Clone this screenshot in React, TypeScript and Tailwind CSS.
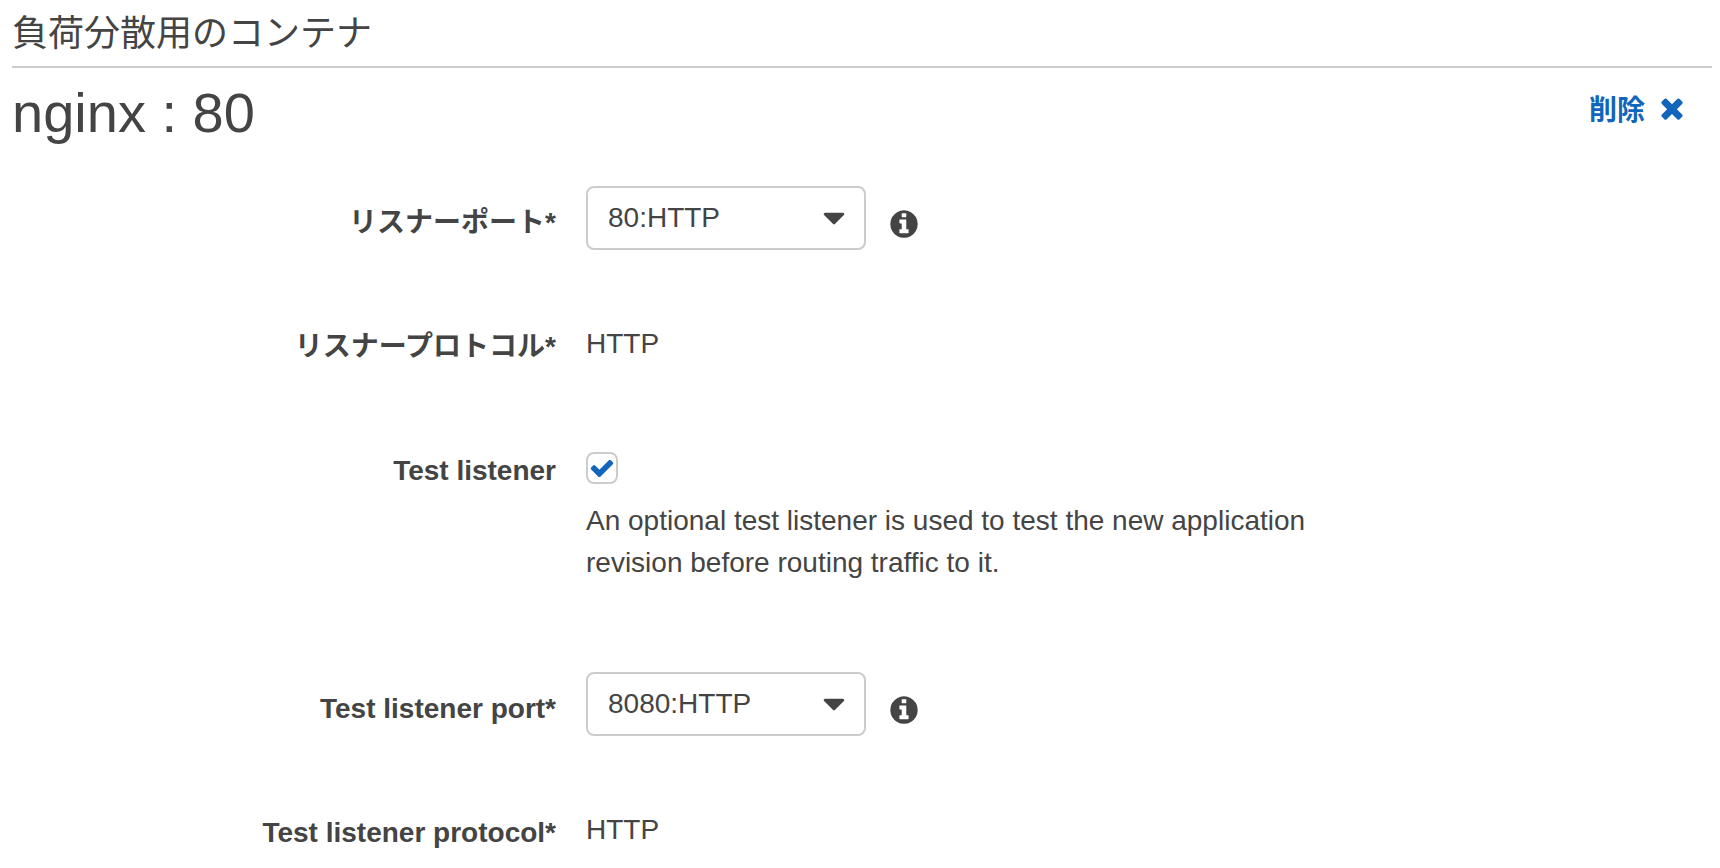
import React, { useState } from 'react';

interface IconProps {
  path: string;
  className?: string;
}

const ICONS = {
  times:
    'M1490 1322q0 40-28 68l-136 136q-28 28-68 28t-68-28l-294-294-294 294q-28 28-68 28t-68-28l-136-136q-28-28-28-68t28-68l294-294-294-294q-28-28-28-68t28-68l136-136q28-28 68-28t68 28l294 294 294-294q28-28 68-28t68 28l136 136q28 28 28 68t-28 68l-294 294 294 294q28 28 28 68z',
  check:
    'M1671 566q0 40-28 68l-724 724-136 136q-28 28-68 28t-68-28l-136-136-362-362q-28-28-28-68t28-68l136-136q28-28 68-28t68 28l294 295 656-657q28-28 68-28t68 28l136 136q28 28 28 68z',
  info: 'M1152 1376v-160q0-14-9-23t-23-9h-96v-512q0-14-9-23t-23-9h-320q-14 0-23 9t-9 23v160q0 14 9 23t23 9h96v320h-96q-14 0-23 9t-9 23v160q0 14 9 23t23 9h448q14 0 23-9t9-23zm-128-896v-160q0-14-9-23t-23-9h-192q-14 0-23 9t-9 23v160q0 14 9 23t23 9h192q14 0 23-9t9-23zm640 416q0 209-103 385.5t-279.5 279.5-385.5 103-385.5-103-279.5-279.5-103-385.5 103-385.5 279.5-279.5 385.5-103 385.5 103 279.5 279.5 103 385.5z',
  caret:
    'M1408 704q0 26-19 45l-448 448q-19 19-45 19t-45-19l-448-448q-19-19-19-45t19-45 45-19h896q26 0 45 19t19 45z',
};

const Icon: React.FC<IconProps> = ({ path, className }) => (
  <svg viewBox="0 0 1792 1792" fill="currentColor" aria-hidden="true" className={className}>
    <path d={path} />
  </svg>
);

interface FormRowProps {
  label: string;
  htmlFor: string;
  children: React.ReactNode;
}

const FormRow: React.FC<FormRowProps> = ({ label, htmlFor, children }) => (
  <div className="flex min-h-16 items-start gap-[30px]">
    <label htmlFor={htmlFor} className="w-[32%] shrink-0 pt-4 text-right font-bold">
      {label}
    </label>
    {children}
  </div>
);

interface PortSelectProps {
  id: string;
  value: string;
  options: string[];
  onChange: (value: string) => void;
}

const PortSelect: React.FC<PortSelectProps> = ({ id, value, options, onChange }) => (
  <div className="flex items-start gap-[22px]">
    <div className="relative w-[280px]">
      <select
        id={id}
        value={value}
        onChange={(e) => onChange(e.target.value)}
        className="h-16 w-full appearance-none rounded-lg border-2 border-[#ccc] bg-white px-5"
      >
        {options.map((option) => (
          <option key={option}>{option}</option>
        ))}
      </select>
      <Icon path={ICONS.caret} className="pointer-events-none absolute top-[14px] right-[14px] size-9" />
    </div>
    <button type="button" aria-label="Info" className="mt-[22px]">
      <Icon path={ICONS.info} className="size-8" />
    </button>
  </div>
);

const App: React.FC = () => {
  const [port, setPort] = useState('80:HTTP');
  const [testPort, setTestPort] = useState('8080:HTTP');
  const [useTest, setUseTest] = useState(true);
  const ports = ['80:HTTP', '8080:HTTP'];

  return (
    <main className="bg-white pr-2 pb-2 pl-3 font-['Liberation_Sans','Noto_Sans_CJK_JP',sans-serif] text-[28px] leading-[42px] text-[#444]">
      <h2 className="border-b-2 border-[#ccc] pt-[10px] pb-2 text-[36px] leading-[48px]">
        負荷分散用のコンテナ
      </h2>

      <div className="flex items-start justify-between pt-[13px] pr-6">
        <h1 className="text-[56px] leading-[64px]">nginx : 80</h1>
        <button
          type="button"
          className="flex items-center gap-[11px] pt-[6px] font-['Noto_Sans_CJK_JP',sans-serif] font-bold text-[#1166bb]"
        >
          削除
          <Icon path={ICONS.times} className="size-8" />
        </button>
      </div>

      <form className="flex flex-col gap-[60px] pt-[41px]">
        <FormRow label="リスナーポート*" htmlFor="port">
          <PortSelect id="port" value={port} options={ports} onChange={setPort} />
        </FormRow>

        <FormRow label="リスナープロトコル*" htmlFor="protocol">
          <output id="protocol" className="pt-[13px]">
            HTTP
          </output>
        </FormRow>

        <FormRow label="Test listener" htmlFor="test-listener">
          <div className="max-w-[760px] pt-[18px] pb-7">
            <div className="relative size-8">
              <input
                id="test-listener"
                type="checkbox"
                checked={useTest}
                onChange={(e) => setUseTest(e.target.checked)}
                className="block size-8 appearance-none rounded-lg border-2 border-[#ccc] bg-white"
              />
              {useTest && (
                <Icon
                  path={ICONS.check}
                  className="pointer-events-none absolute top-[3px] left-[3px] size-[26px] text-[#1166bb]"
                />
              )}
            </div>
            <p className="pt-4">
              An optional test listener is used to test the new application revision before routing
              traffic to it.
            </p>
          </div>
        </FormRow>

        <FormRow label="Test listener port*" htmlFor="test-port">
          <PortSelect id="test-port" value={testPort} options={ports} onChange={setTestPort} />
        </FormRow>

        <FormRow label="Test listener protocol*" htmlFor="test-protocol">
          <output id="test-protocol" className="pt-[13px]">
            HTTP
          </output>
        </FormRow>
      </form>
    </main>
  );
};

export default App;
